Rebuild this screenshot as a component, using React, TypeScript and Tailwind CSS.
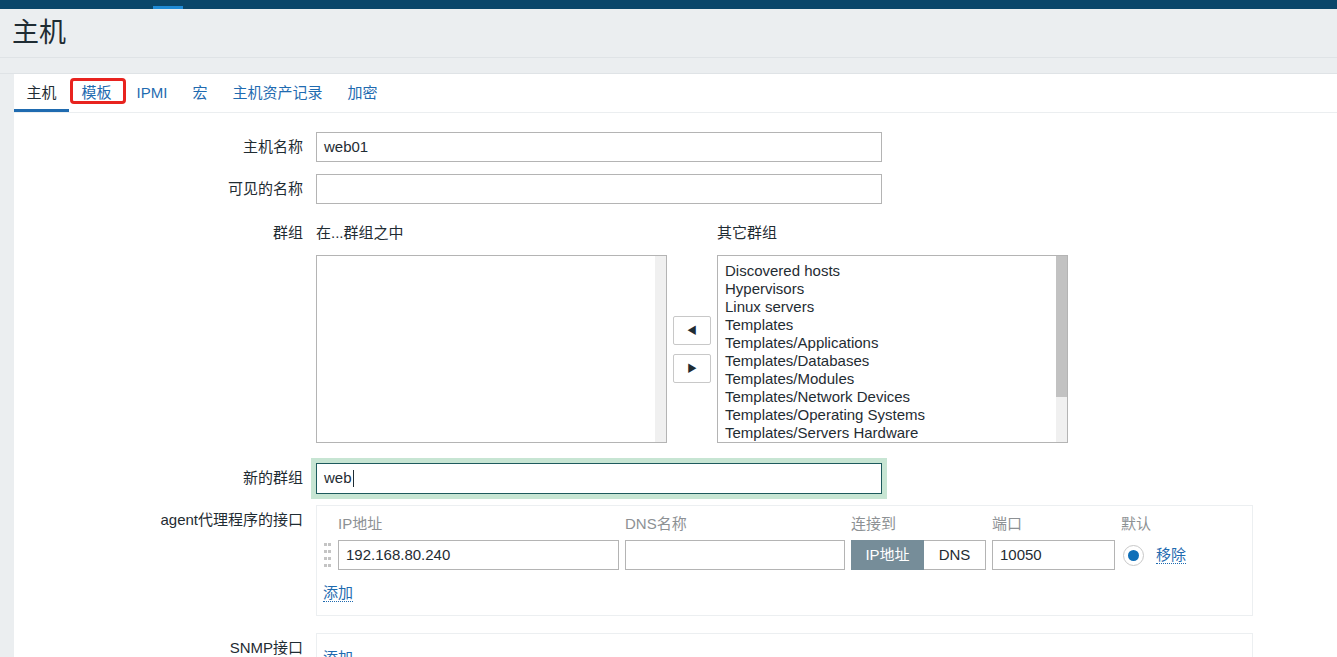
import React from "react";

const OTHER_GROUPS = [
  "Discovered hosts",
  "Hypervisors",
  "Linux servers",
  "Templates",
  "Templates/Applications",
  "Templates/Databases",
  "Templates/Modules",
  "Templates/Network Devices",
  "Templates/Operating Systems",
  "Templates/Servers Hardware",
];

const TABS = ["主机", "模板", "IPMI", "宏", "主机资产记录", "加密"];

function TextInput({ value, className = "" }: { value?: string; className?: string }) {
  return (
    <div
      className={
        "flex h-[30px] items-center border border-[#b4b4b4] bg-white px-[7px] text-[15px] text-[#1f2c33] " +
        className
      }
    >
      {value}
    </div>
  );
}

function ListBox({ items }: { items: string[] }) {
  return (
    <div className="flex h-[188px] w-[351px] border border-[#b4b4b4] bg-white">
      <div className="flex-1 overflow-hidden pl-[7px] pt-[6px] text-[15px] leading-[18px] text-[#1f2c33]">
        {items.map((g) => (
          <div key={g} className="whitespace-nowrap">
            {g}
          </div>
        ))}
      </div>
      <div className="flex w-[11px] flex-col bg-[#f0f0f0]">
        {items.length > 0 && <div className="h-[141px] bg-[#c2c2c2]" />}
      </div>
    </div>
  );
}

function DragHandle() {
  return (
    <div className="grid h-[24px] w-[9px] grid-cols-2 content-between justify-items-center">
      {Array.from({ length: 8 }).map((_, i) => (
        <span key={i} className="h-[3px] w-[3px] bg-[#c4c4c4]" />
      ))}
    </div>
  );
}

function DottedLink({ children }: { children: React.ReactNode }) {
  return (
    <span className="border-b border-dotted border-[#1f6bb0] leading-[17px] text-[#1f6bb0]">
      {children}
    </span>
  );
}

export default function App() {
  return (
    <div className="h-[657px] w-full overflow-hidden bg-[#ebeef0] font-['Liberation_Sans','Noto_Sans_CJK_SC',sans-serif] text-[#1f2c33]">
      {/* top navigation strip */}
      <div className="flex h-[9px] items-end bg-[#0a466a] pl-[153px]">
        <div className="h-[3px] w-[30px] bg-[#1f8ad6]" />
      </div>

      {/* page title */}
      <div className="flex h-[49px] items-center border-b border-[#dfe3e6] px-[12px]">
        <h1 className="text-[27px] leading-none text-[#1f2c33]">主机</h1>
      </div>
      <div className="h-[16px] border-b border-[#dfe3e6]" />

      <div className="ml-[14px] bg-white">
        {/* tabs */}
        <div className="flex h-[39px] border-b border-[#ebeef0]">
          {TABS.map((t, i) => (
            <div
              key={t}
              className={
                "relative flex items-center px-[12.5px] text-[15px] " +
                (i === 0
                  ? "border-b-[3px] border-[#1f6bb0] pt-[3px] text-[#1f2c33]"
                  : "text-[#1f6bb0]")
              }
            >
              {t}
              {i === 1 && (
                <span className="absolute left-[1px] right-[-2px] top-[4px] bottom-[8px] rounded-[4px] border-[3px] border-[#e8231f]" />
              )}
            </div>
          ))}
        </div>

        {/* form */}
        <div className="grid grid-cols-[289px_1fr] items-start gap-x-[13px] pt-[19px] text-[15px]">
          <div className="flex h-[30px] items-center justify-end">主机名称</div>
          <TextInput value="web01" className="w-[566px]" />

          <div className="mt-[12px] flex h-[30px] items-center justify-end">可见的名称</div>
          <TextInput className="mt-[12px] w-[566px]" />

          <div className="mt-[19px] flex h-[20px] items-center justify-end">群组</div>
          <div className="mt-[19px] flex">
            <div className="flex flex-col">
              <div className="flex h-[20px] items-center">在...群组之中</div>
              <div className="mt-[12px]">
                <ListBox items={[]} />
              </div>
            </div>
            <div className="flex w-[50px] flex-col items-center justify-center gap-[9px] pt-[32px]">
              <button className="flex h-[29px] w-[38px] items-center justify-center rounded-[2px] border border-[#c8c8c8] bg-white text-[10px] text-[#1f2c33]">
                ◀
              </button>
              <button className="flex h-[29px] w-[38px] items-center justify-center rounded-[2px] border border-[#c8c8c8] bg-white text-[10px] text-[#1f2c33]">
                ▶
              </button>
            </div>
            <div className="flex flex-col">
              <div className="flex h-[20px] items-center">其它群组</div>
              <div className="mt-[12px]">
                <ListBox items={OTHER_GROUPS} />
              </div>
            </div>
          </div>

          <div className="mt-[20px] flex h-[30px] items-center justify-end">新的群组</div>
          <div className="mt-[20px] w-[566px]">
            <div className="flex h-[31px] items-center border border-[#1d5a5d] bg-white px-[7px] ring-[5px] ring-[#c7e5d3]">
              web<span className="ml-[1px] h-[17px] w-[1px] bg-[#1f2c33]" />
            </div>
          </div>

          <div className="mt-[11px] pt-[6px] text-right leading-[18px]">agent代理程序的接口</div>
          <div className="mt-[11px] w-[937px] border border-[#eceff1] pb-[13px] pl-[6px] pt-[9px] leading-[18px]">
            <div className="grid grid-cols-[9px_281px_220px_135px_123px_auto] items-center gap-x-[6px]">
              <span />
              <span className="text-[#8d9194]">IP地址</span>
              <span className="text-[#8d9194]">DNS名称</span>
              <span className="text-[#8d9194]">连接到</span>
              <span className="text-[#8d9194]">端口</span>
              <span className="text-[#8d9194]">默认</span>

              <div className="mt-[7px]">
                <DragHandle />
              </div>
              <TextInput value="192.168.80.240" className="mt-[7px]" />
              <TextInput className="mt-[7px]" />
              <div className="mt-[7px] flex h-[30px]">
                <div className="flex w-[73px] items-center justify-center bg-[#768d99] text-white">IP地址</div>
                <div className="flex flex-1 items-center justify-center border border-l-0 border-[#b4b4b4] bg-white">
                  DNS
                </div>
              </div>
              <TextInput value="10050" className="mt-[7px]" />
              <div className="mt-[7px] flex items-center gap-[12px] pl-[2px]">
                <span className="flex h-[21px] w-[21px] items-center justify-center rounded-full border border-[#c8c8c8] bg-white">
                  <span className="h-[11px] w-[11px] rounded-full bg-[#0f6fb8]" />
                </span>
                <DottedLink>移除</DottedLink>
              </div>
            </div>
            <div className="mt-[14px]">
              <DottedLink>添加</DottedLink>
            </div>
          </div>

          <div className="mt-[17px] pt-[6px] text-right leading-[18px]">SNMP接口</div>
          <div className="mt-[17px] h-[40px] w-[937px] border border-[#eceff1] pl-[6px] pt-[15px] leading-[18px]">
            <DottedLink>添加</DottedLink>
          </div>
        </div>
      </div>
    </div>
  );
}
